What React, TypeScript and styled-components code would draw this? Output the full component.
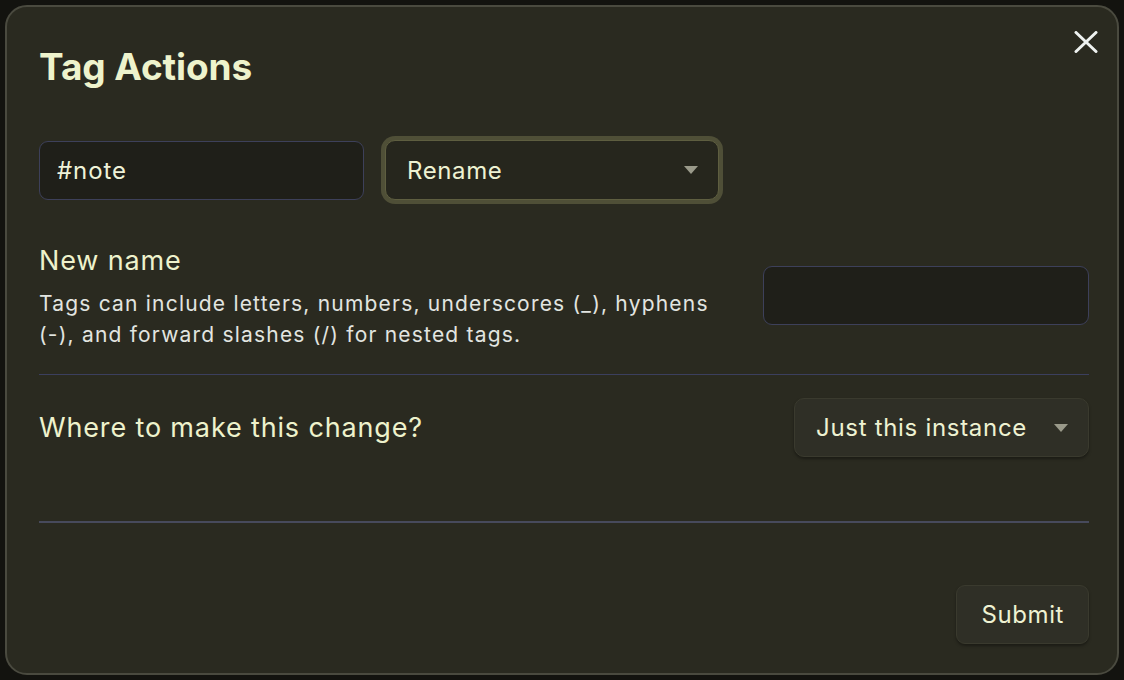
import React from "react";
import styled, { createGlobalStyle } from "styled-components";

const Global = createGlobalStyle`
  html, body { margin: 0; padding: 0; background: #13130f; }
  body { font-family: Inter, "Noto Sans", sans-serif; }
  * { box-sizing: border-box; }
`;

const Page = styled.div`
  width: 1124px;
  height: 680px;
  padding: 5px;
  background: #13130f;
`;

const Modal = styled.div`
  position: relative;
  width: 1114px;
  height: 670px;
  background: #2a2a20;
  border: 2px solid #4a4a3f;
  border-radius: 22px;
  padding: 37px 28px 0 32px;
  display: flex;
  flex-direction: column;
  color: #eef2c8;
`;

const Title = styled.h1`
  margin: 0;
  font-size: 37px;
  font-weight: 700;
  line-height: 46px;
  color: #eef3cc;
  letter-spacing: -0.1px;
`;

const Close = styled.button`
  position: absolute;
  top: 19px;
  right: 15px;
  width: 32px;
  height: 32px;
  padding: 0;
  border: none;
  background: transparent;
  display: flex;
  align-items: center;
  justify-content: center;
  color: #eef2f0;
`;

const TopRow = styled.div`
  display: flex;
  gap: 21px;
  margin-top: 50px;
  align-items: center;
`;

const TextInput = styled.div<{ $w: number; $lift?: number }>`
  width: ${(p) => p.$w}px;
  height: 59px;
  margin-bottom: ${(p) => p.$lift ?? 0}px;
  border: 1px solid #3d405a;
  border-radius: 9px;
  background: #1f1f19;
  display: flex;
  align-items: center;
  padding: 0 17px;
  font-size: 24px;
  letter-spacing: 0.9px;
  color: #eef2d8;
`;

const Select = styled.div<{ $focused?: boolean; $w: number }>`
  width: ${(p) => p.$w}px;
  height: ${(p) => (p.$focused ? 60 : 59)}px;
  border-radius: 10px;
  background: ${(p) => (p.$focused ? "#26261d" : "#2f2f26")};
  border: 1px solid ${(p) => (p.$focused ? "#5e5e40" : "#3a3a2e")};
  box-shadow: ${(p) =>
    p.$focused ? "0 0 0 4px #4f4f37" : "0 2px 3px rgba(0,0,0,0.35)"};
  display: flex;
  align-items: center;
  justify-content: space-between;
  padding: 0 20px 0 21px;
  font-size: 24px;
  letter-spacing: ${(p) => (p.$focused ? 0.6 : 0.7)}px;
  color: #eef2d2;
`;

const Caret = styled.span`
  width: 0;
  height: 0;
  border-left: 7px solid transparent;
  border-right: 7px solid transparent;
  border-top: 8px solid #9a9a8a;
`;

const SettingRow = styled.div<{ $top: number; $bottom: number }>`
  display: flex;
  align-items: center;
  justify-content: space-between;
  padding: ${(p) => p.$top}px 0 ${(p) => p.$bottom}px;
`;

const Info = styled.div`
  display: flex;
  flex-direction: column;
  width: 700px;
`;

const Name = styled.div`
  font-size: 27px;
  line-height: 34px;
  letter-spacing: 0.85px;
  color: #eef2cc;
`;

const Desc = styled.div`
  margin-top: 10px;
  font-size: 21px;
  line-height: 31px;
  letter-spacing: 1.2px;
  color: #e2e5e0;
`;

const Divider = styled.div<{ $thick?: boolean; $color: string }>`
  height: ${(p) => (p.$thick ? 2 : 1)}px;
  background: ${(p) => p.$color};
`;

const Footer = styled.div`
  display: flex;
  justify-content: flex-end;
  padding-top: 62px;
`;

const Button = styled.button`
  height: 59px;
  padding: 0 24px;
  border-radius: 9px;
  border: 1px solid #3a3a2e;
  background: #2f2f26;
  box-shadow: 0 2px 3px rgba(0,0,0,0.35);
  color: #eef2d2;
  font-family: inherit;
  font-size: 24px;
  letter-spacing: 0.6px;
`;

export default function App() {
  return (
    <Page>
      <Global />
      <Modal>
        <Close aria-label="Close">
          <svg width="24" height="22" viewBox="0 0 24 22" fill="none">
            <path d="M2 1.5L22 20.5M22 1.5L2 20.5" stroke="currentColor" strokeWidth="3" strokeLinecap="round" />
          </svg>
        </Close>
        <Title>Tag Actions</Title>
        <TopRow>
          <TextInput $w={325}>#note</TextInput>
          <Select $focused $w={334}>
            Rename
            <Caret />
          </Select>
        </TopRow>
        <SettingRow $top={44} $bottom={24}>
          <Info>
            <Name>New name</Name>
            <Desc>
              Tags can include letters, numbers, underscores (_), hyphens (-), and forward slashes (/) for nested tags.
            </Desc>
          </Info>
          <TextInput $w={326} $lift={4} />
        </SettingRow>
        <Divider $color="#3b3f5e" />
        <SettingRow $top={23} $bottom={64}>
          <Name>Where to make this change?</Name>
          <Select $w={295}>
            Just this instance
            <Caret />
          </Select>
        </SettingRow>
        <Divider $thick $color="#474a5c" />
        <Footer>
          <Button>Submit</Button>
        </Footer>
      </Modal>
    </Page>
  );
}
